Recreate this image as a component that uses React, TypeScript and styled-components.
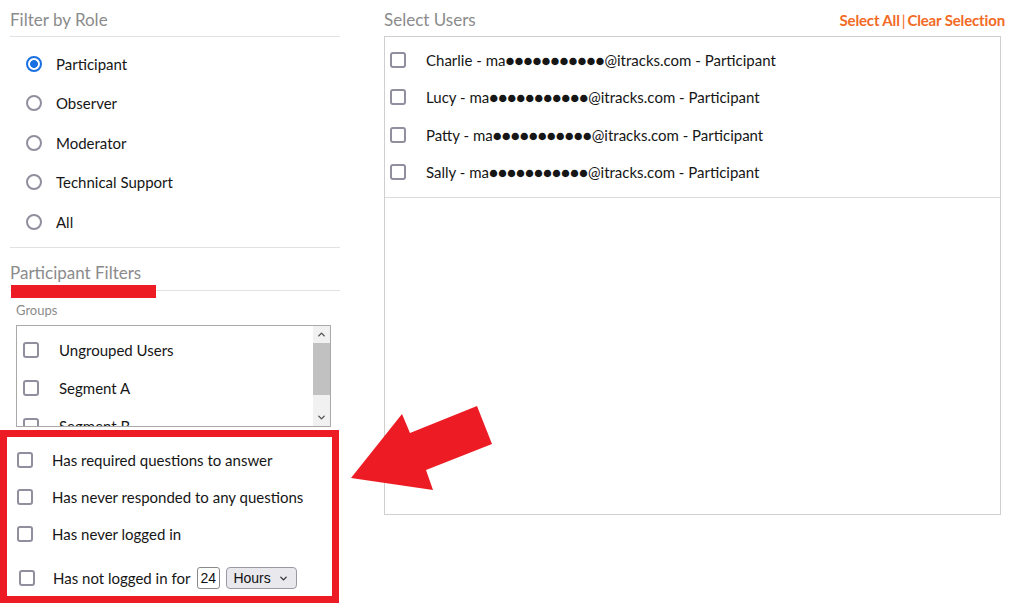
import styled, { createGlobalStyle } from "styled-components";
import { ChevronDown, ChevronUp } from "lucide-react";

const roles = ["Participant", "Observer", "Moderator", "Technical Support", "All"];
const groups = ["Ungrouped Users", "Segment A", "Segment B"];
const users = ["Charlie", "Lucy", "Patty", "Sally"];
const mask = "●".repeat(11);

export default function App() {
  return (
    <>
      <GlobalStyle />
      <Page>
        <LeftColumn>
          <Heading>Filter by Role</Heading>
          <RadioList>
            {roles.map((role, i) => (
              <RadioRow key={role}>
                <Radio type="radio" name="role" defaultChecked={i === 0} />
                {role}
              </RadioRow>
            ))}
          </RadioList>
          <FilterHeading>
            <Marked>Participant Filters</Marked>
          </FilterHeading>
          <SmallLabel>Groups</SmallLabel>
          <GroupBox>
            <GroupItems>
              {groups.map((g) => (
                <GroupRow key={g}>
                  <Check type="checkbox" />
                  {g}
                </GroupRow>
              ))}
            </GroupItems>
            <ScrollTrack>
              <ScrollButton>
                <ChevronUp size={11} strokeWidth={3} />
              </ScrollButton>
              <Thumb />
              <ScrollButton $bottom>
                <ChevronDown size={11} strokeWidth={3} />
              </ScrollButton>
            </ScrollTrack>
          </GroupBox>
          <Highlight>
            <FlagRow>
              <Check type="checkbox" />
              Has required questions to answer
            </FlagRow>
            <FlagRow>
              <Check type="checkbox" />
              Has never responded to any questions
            </FlagRow>
            <FlagRow>
              <Check type="checkbox" />
              Has never logged in
            </FlagRow>
            <FlagRow $last>
              <Check type="checkbox" />
              <span>Has not logged in for</span>
              <NumberBox defaultValue="24" />
              <SelectWrap>
                <UnitSelect defaultValue="Hours">
                  <option>Hours</option>
                  <option>Days</option>
                </UnitSelect>
                <SelectIcon>
                  <ChevronDown size={11} strokeWidth={2.5} />
                </SelectIcon>
              </SelectWrap>
            </FlagRow>
          </Highlight>
        </LeftColumn>

        <RightColumn>
          <HeaderRow>
            <Title>Select Users</Title>
            <Links>
              <a>Select All</a>
              <Sep>|</Sep>
              <a>Clear Selection</a>
            </Links>
          </HeaderRow>
          <UserBox>
            <UserList>
              {users.map((u) => (
                <UserRow key={u}>
                  <Check type="checkbox" />
                  {u} - ma{mask}@itracks.com - Participant
                </UserRow>
              ))}
            </UserList>
          </UserBox>
        </RightColumn>

        <Arrow width="160" height="100" viewBox="0 0 160 100">
          <polygon
            points="11,78 62,14 70,33 137,6 152,44 86,70 93,90"
            fill="#ed1c24"
          />
        </Arrow>
      </Page>
    </>
  );
}

const GlobalStyle = createGlobalStyle`
  body {
    margin: 0;
    background: #fff;
    font-family: Lato, "Open Sans", sans-serif;
    color: #161616;
  }
`;

const Page = styled.div`
  position: relative;
  display: flex;
  width: 1011px;
  height: 603px;
  overflow: hidden;
`;

const LeftColumn = styled.div`
  width: 340px;
  display: flex;
  flex-direction: column;
`;

const Heading = styled.h2`
  margin: 0 0 0 10px;
  padding: 8px 0 4px;
  font-size: 17px;
  font-weight: 400;
  line-height: 24px;
  color: #8b8b8b;
  border-bottom: 1px solid #e2e2e2;
`;

const RadioList = styled.div`
  margin-left: 10px;
  padding: 7px 0 5px 16px;
  border-bottom: 1px solid #e2e2e2;
`;

const RadioRow = styled.label`
  display: flex;
  align-items: center;
  gap: 14px;
  height: 39.5px;
  font-size: 15px;
`;

const Radio = styled.input`
  appearance: none;
  margin: 0;
  width: 16px;
  height: 16px;
  border-radius: 50%;
  border: 2px solid #8f8f9d;
  background: #fff;
  &:checked {
    border-color: #1a6fe3;
    background: radial-gradient(circle, #1a6fe3 0 3.6px, #fff 4.2px);
  }
`;

const FilterHeading = styled.div`
  margin: 13px 0 0 10px;
  padding-bottom: 5px;
  border-bottom: 1px solid #e2e2e2;
  font-size: 17px;
  line-height: 24px;
  color: #8b8b8b;
`;

const Marked = styled.span`
  position: relative;
  &::after {
    content: "";
    position: absolute;
    left: 1px;
    top: 23px;
    width: 145px;
    height: 13px;
    background: #ed1c24;
  }
`;

const SmallLabel = styled.div`
  margin: 11px 0 0 16px;
  font-size: 13px;
  line-height: 16px;
  color: #8b8b8b;
`;

const GroupBox = styled.div`
  display: flex;
  margin: 7px 0 0 16px;
  width: 315px;
  height: 102px;
  box-sizing: border-box;
  border: 1px solid #a9a9a9;
`;

const GroupItems = styled.div`
  flex: 1;
  overflow: hidden;
  padding: 5px 0 0 6px;
`;

const ScrollTrack = styled.div`
  width: 17px;
  display: flex;
  flex-direction: column;
  background: #f1f1f1;
`;

const ScrollButton = styled.div<{ $bottom?: boolean }>`
  height: 17px;
  display: flex;
  align-items: center;
  justify-content: center;
  color: #505050;
  margin-top: ${(p) => (p.$bottom ? "auto" : "0")};
`;

const Thumb = styled.div`
  height: 52px;
  background: #c1c1c1;
`;

const GroupRow = styled.label`
  display: flex;
  align-items: center;
  gap: 20px;
  height: 38px;
  font-size: 15px;
  white-space: nowrap;
`;

const Check = styled.input`
  appearance: none;
  flex: none;
  margin: 0;
  width: 16px;
  height: 16px;
  box-sizing: border-box;
  border: 2px solid #8f8f9d;
  border-radius: 3px;
  background: #fff;
`;

const Highlight = styled.div`
  margin-top: 3px;
  width: 339px;
  box-sizing: border-box;
  border: 7px solid #ed1c24;
  padding: 4.5px 0 0 10px;
`;

const FlagRow = styled.label<{ $last?: boolean }>`
  display: flex;
  align-items: center;
  height: 37px;
  margin-top: ${(p) => (p.$last ? "7px" : "0")};
  padding-left: ${(p) => (p.$last ? "2px" : "0")};
  font-size: 15px;
  & > input[type="checkbox"] {
    margin-right: ${(p) => (p.$last ? "18px" : "19px")};
  }
`;

const NumberBox = styled.input`
  margin-left: 7px;
  width: 23px;
  height: 22px;
  box-sizing: border-box;
  padding: 0 2px;
  border: 1px solid #8a8a8a;
  border-radius: 3px;
  font-family: "Liberation Sans", Arial, sans-serif;
  font-size: 14px;
  color: #111;
`;

const SelectWrap = styled.div`
  position: relative;
  margin-left: 6px;
  display: flex;
`;

const UnitSelect = styled.select`
  appearance: none;
  width: 71px;
  height: 22px;
  box-sizing: border-box;
  border: 1px solid #9a9aa6;
  border-radius: 4px;
  background: #e9e9ed;
  font-family: "Liberation Sans", Arial, sans-serif;
  font-size: 14px;
  color: #111;
  padding: 0 0 0 6px;
`;

const SelectIcon = styled.span`
  position: absolute;
  right: 8px;
  top: 6px;
  display: flex;
  color: #222;
  pointer-events: none;
`;

const RightColumn = styled.div`
  margin-left: 44px;
  width: 621px;
  display: flex;
  flex-direction: column;
`;

const HeaderRow = styled.div`
  display: flex;
  justify-content: space-between;
  align-items: center;
  height: 32px;
  padding-top: 8px;
  box-sizing: border-box;
  margin-bottom: 4px;
`;

const Title = styled.div`
  font-size: 17px;
  line-height: 24px;
  color: #8b8b8b;
`;

const Links = styled.div`
  font-size: 15px;
  font-weight: 700;
  line-height: 24px;
  letter-spacing: -0.15px;
  color: #f26a24;
  a {
    cursor: pointer;
  }
`;

const Sep = styled.span`
  font-weight: 400;
  margin: 0 2px;
`;

const UserBox = styled.div`
  width: 617px;
  height: 479px;
  box-sizing: border-box;
  border: 1px solid #cfcfcf;
`;

const UserList = styled.div`
  padding: 4px 0 6px 5px;
  border-bottom: 1px solid #dcdcdc;
`;

const UserRow = styled.label`
  display: flex;
  align-items: center;
  gap: 20px;
  height: 37.5px;
  font-size: 15px;
`;

const Arrow = styled.svg`
  position: absolute;
  left: 340px;
  top: 400px;
`;
